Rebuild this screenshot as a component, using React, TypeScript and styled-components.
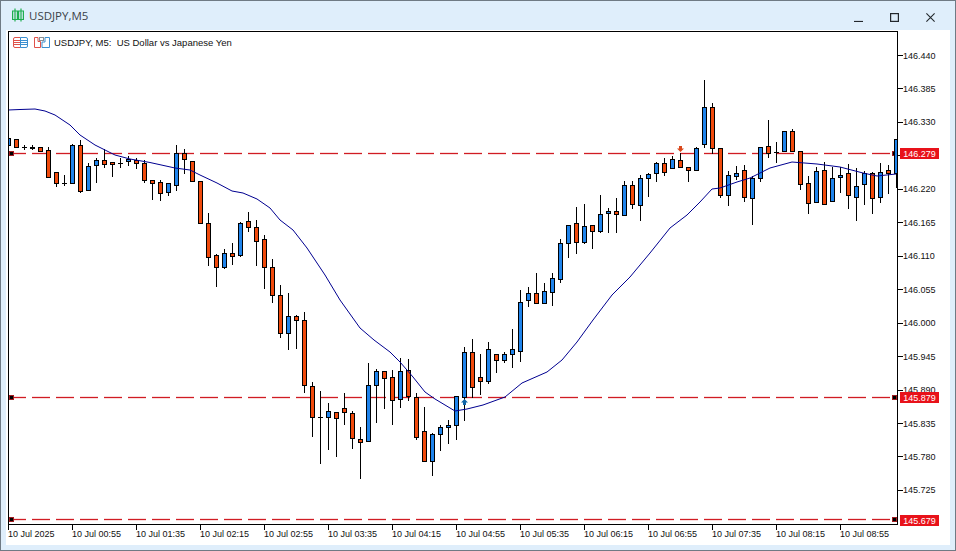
import styled, { createGlobalStyle } from 'styled-components';

const GlobalStyle = createGlobalStyle`
	html, body {
		margin: 0;
		padding: 0;
		background: #ffffff;
	}
`;

const labelFont = `'Liberation Sans', Arial, sans-serif`;

const Window = styled.div`
	width: 956px;
	height: 551px;
	box-sizing: border-box;
	display: flex;
	flex-direction: column;
	border: 1px solid #6f7a84;
	padding: 0 5px 5px;
	background: #dfeefb;
`;

const TitleBar = styled.div`
	display: flex;
	align-items: center;
	height: 29px;
	flex-shrink: 0;
`;

const WindowTitle = styled.span`
	margin-left: 5px;
	margin-top: -1px;
	font-family: 'Open Sans', sans-serif;
	font-size: 11.5px;
	color: #3c4248;
`;

const TitleIcon = styled.svg`
	margin-left: 6px;
	margin-top: -1px;
`;

const WindowControls = styled.div`
	display: flex;
	align-items: center;
	margin-left: auto;
	margin-right: 15px;
	margin-top: 3px;
	gap: 27px;
`;

const ChartPanel = styled.div`
	flex: 1;
	display: grid;
	grid-template-columns: 890px 1fr;
	grid-template-rows: 494px 1fr;
	padding: 1px 0 0 2px;
	background: #ffffff;
`;

const Plot = styled.div`
	position: relative;
	box-sizing: border-box;
	border: 1px solid #000000;
	height: 494px;
`;

const PlotSvg = styled.svg`
	display: block;
`;

const ChartHeader = styled.div`
	position: absolute;
	left: 4px;
	top: 5px;
	display: flex;
	align-items: center;
	gap: 5px;
`;

const ChartCaption = styled.span`
	margin-left: -1px;
	font-family: ${labelFont};
	font-size: 9.5px;
	line-height: 11px;
	color: #111111;
	white-space: pre;
`;

const PriceAxis = styled.div`
	position: relative;
	display: flex;
	flex-direction: column;
	padding-top: 7.8px;
`;

const PriceRow = styled.div`
	display: flex;
	align-items: center;
	height: 33.46px;
	flex-shrink: 0;
`;

const PriceTick = styled.i`
	display: block;
	width: 5px;
	height: 1px;
	background: #000000;
`;

const PriceText = styled.span`
	font-family: ${labelFont};
	font-size: 9px;
	color: #111111;
`;

const PriceTag = styled.div<{ $top: number }>`
	position: absolute;
	left: 2px;
	top: ${(p) => p.$top}px;
	width: 39px;
	height: 11px;
	display: flex;
	align-items: center;
	justify-content: center;
	background: #e8121a;
	color: #ffffff;
	font-family: ${labelFont};
	font-size: 9px;
`;

const TimeAxis = styled.div`
	grid-column: 1 / 3;
	display: flex;
`;

const TimeCell = styled.div`
	width: 64px;
	flex-shrink: 0;
	display: flex;
	flex-direction: column;
`;

const TimeTick = styled.i`
	display: block;
	width: 1px;
	height: 5px;
	background: #000000;
`;

const TimeText = styled.span`
	margin-top: -1px;
	font-family: ${labelFont};
	font-size: 9px;
	line-height: 10px;
	color: #111111;
	white-space: nowrap;
`;

type Candle = [number, number, number, number, 'b' | 'o' | 'd'];

// high, low, body top, body bottom, kind
const candles: Candle[] = [
	[138, 145, 138, 145, 'b'], [139, 147, 139, 147, 'o'], [145, 149, 147, 147, 'd'], [145, 149, 147, 148, 'd'],
	[147, 151, 147, 151, 'o'], [147, 177, 150, 177, 'o'], [172, 186, 172, 183, 'o'], [175, 185, 183, 183, 'd'],
	[144, 183, 145, 183, 'b'], [140, 192, 145, 191, 'o'], [163, 190, 166, 190, 'b'], [158, 182, 160, 165, 'b'],
	[149, 167, 160, 164, 'o'], [162, 176, 162, 164, 'o'], [158, 167, 163, 163, 'd'], [156, 165, 159, 161, 'b'],
	[158, 168, 160, 163, 'o'], [160, 182, 163, 180, 'o'], [180, 199, 180, 183, 'o'], [180, 200, 182, 193, 'o'],
	[183, 195, 183, 192, 'b'], [145, 190, 153, 185, 'b'], [149, 173, 153, 159, 'o'], [161, 181, 161, 181, 'o'],
	[181, 223, 181, 223, 'o'], [213, 265, 223, 257, 'o'], [254, 286, 255, 267, 'o'], [249, 268, 253, 267, 'b'],
	[243, 264, 253, 256, 'o'], [222, 256, 223, 255, 'b'], [212, 231, 221, 227, 'o'], [220, 265, 227, 241, 'o'],
	[235, 288, 239, 267, 'o'], [259, 302, 267, 295, 'o'], [285, 337, 295, 333, 'o'], [293, 349, 316, 333, 'b'],
	[315, 348, 316, 320, 'o'], [312, 392, 320, 385, 'o'], [382, 436, 386, 417, 'o'], [391, 463, 417, 417, 'd'],
	[403, 449, 411, 417, 'b'], [412, 456, 412, 418, 'o'], [393, 424, 408, 412, 'o'], [411, 448, 413, 438, 'o'],
	[427, 478, 439, 442, 'o'], [363, 441, 385, 441, 'b'], [369, 422, 371, 385, 'b'], [371, 408, 371, 378, 'o'],
	[370, 424, 377, 400, 'o'], [358, 407, 371, 399, 'b'], [359, 400, 370, 396, 'o'], [393, 439, 397, 437, 'o'],
	[407, 461, 431, 461, 'o'], [433, 475, 434, 461, 'b'], [425, 450, 427, 434, 'b'], [420, 443, 425, 427, 'b'],
	[396, 439, 396, 425, 'b'], [347, 420, 352, 397, 'b'], [339, 397, 352, 387, 'o'], [354, 394, 377, 381, 'o'],
	[342, 383, 349, 381, 'b'], [354, 372, 354, 360, 'o'], [352, 362, 354, 360, 'b'], [329, 367, 349, 354, 'b'],
	[290, 361, 302, 351, 'b'], [287, 306, 293, 300, 'b'], [273, 303, 293, 303, 'o'], [283, 303, 291, 303, 'b'],
	[273, 305, 278, 292, 'b'], [239, 282, 243, 279, 'b'], [225, 257, 225, 243, 'b'], [207, 253, 223, 242, 'o'],
	[204, 243, 226, 242, 'b'], [225, 248, 225, 231, 'o'], [195, 232, 214, 231, 'b'], [208, 232, 211, 213, 'b'],
	[198, 232, 211, 214, 'o'], [181, 215, 185, 215, 'b'], [181, 208, 185, 204, 'o'], [175, 220, 178, 205, 'b'],
	[173, 196, 174, 178, 'b'], [162, 181, 163, 173, 'b'], [158, 175, 163, 172, 'o'], [156, 168, 159, 168, 'b'],
	[153, 167, 160, 167, 'o'], [167, 181, 167, 170, 'o'], [147, 170, 148, 170, 'b'], [80, 147, 107, 144, 'b'],
	[103, 153, 107, 148, 'o'], [148, 197, 148, 195, 'o'], [171, 205, 175, 195, 'b'], [166, 179, 173, 176, 'b'],
	[165, 201, 170, 197, 'o'], [176, 224, 178, 198, 'b'], [147, 181, 147, 178, 'b'], [120, 157, 146, 153, 'o'],
	[142, 162, 152, 152, 'd'], [131, 151, 131, 151, 'b'], [129, 151, 131, 151, 'o'], [151, 189, 151, 184, 'o'],
	[176, 213, 183, 203, 'o'], [167, 202, 171, 202, 'b'], [162, 204, 170, 204, 'o'], [167, 201, 178, 201, 'b'],
	[167, 192, 175, 177, 'b'], [164, 208, 173, 195, 'o'], [168, 220, 186, 197, 'b'], [171, 204, 173, 184, 'b'],
	[172, 213, 173, 198, 'o'], [163, 202, 172, 197, 'b'], [165, 193, 170, 173, 'o'], [139, 187, 139, 173, 'b'],
];

const maLine =
	'8,110 20,109.5 35,109 45,111 55,115 70,125 80,135 95,145 115,155 130,159 150,162.5 175,168 190,170 200,175 217,183 232,191 243,193 257,199 270,208 280,220 293,230 307,248 325,275 340,300 360,328 374,340 390,352 400,362 413,377 425,392 435,399 455,411 467,409 483,405 505,397 522,383 547,372 562,360 577,342 593,320 612,295 630,277 650,253 670,228 687,215 700,202 712,189 720,188 737,182 750,178 770,168 792,162 817,164 840,167 863,173 877,176 896,174';

const bodyColors = { b: '#1f84ec', o: '#f04a0c', d: '#000000' };
const levels = [153, 397, 519];

const prices = [
	'146.440', '146.385', '146.330', '146.275', '146.220', '146.165', '146.110',
	'146.055', '146.000', '145.945', '145.890', '145.835', '145.780', '145.725',
];

const tags = [
	{ label: '146.279', top: 117 },
	{ label: '145.879', top: 361 },
	{ label: '145.679', top: 484 },
];

const times = [
	'10 Jul 2025', '10 Jul 00:55', '10 Jul 01:35', '10 Jul 02:15', '10 Jul 02:55', '10 Jul 03:35', '10 Jul 04:15',
	'10 Jul 04:55', '10 Jul 05:35', '10 Jul 06:15', '10 Jul 06:55', '10 Jul 07:35', '10 Jul 08:15', '10 Jul 08:55',
];

const CandleMark = ({ data, index }: { data: Candle; index: number }) => {
	const [high, low, top, bottom, kind] = data;
	const x = 8.5 + index * 8;
	return (
		<g shapeRendering='crispEdges'>
			<line x1={x} x2={x} y1={high} y2={low + 1} stroke='#000000' />
			{top === bottom ? (
				<line x1={x - 2.5} x2={x + 2.5} y1={top + 0.5} y2={top + 0.5} stroke='#000000' />
			) : (
				<rect x={x - 2} y={top + 0.5} width={4} height={bottom - top} fill={bodyColors[kind]} stroke='#000000' />
			)}
		</g>
	);
};

const LevelHandle = ({ x, y }: { x: number; y: number }) => (
	<rect x={x} y={y - 1.5} width={4} height={4} fill='#000000' stroke='#a01c20' shapeRendering='crispEdges' />
);

const PriceChart = () => (
	<PlotSvg width={888} height={492} viewBox='9 32 888 492'>
		{levels.map((y) => (
			<g key={y} shapeRendering='crispEdges'>
				<line x1={8} x2={892} y1={y + 0.5} y2={y + 0.5} stroke='#f9dcdc' strokeWidth={3} strokeDasharray='18 6' />
				<line x1={8} x2={892} y1={y + 0.5} y2={y + 0.5} stroke='#d01c24' strokeDasharray='18 6' />
				<LevelHandle x={9.5} y={y} />
				<LevelHandle x={892.5} y={y} />
			</g>
		))}
		{candles.map((c, i) => (
			<CandleMark key={i} data={c} index={i} />
		))}
		<polyline points={maLine} fill='none' stroke='#000090' strokeWidth={1} />
		<path d='M464.5 399l3.5 3.5h-2v2.5h-3v-2.5h-2z' fill='#0f64a8' />
		<path d='M680.5 152l-3.5-3.5h2v-2.5h3v2.5h2z' fill='#d9481c' />
	</PlotSvg>
);

const App = () => (
	<>
		<GlobalStyle />
		<Window>
			<TitleBar>
				<TitleIcon width={12} height={14} viewBox='0 0 12 14' fill='none' stroke='#1fae4e' strokeWidth={1.2}>
					<path d='M3 0.5v13M0.6 3h4.8v8.5H0.6zM9 0.5v13M6.6 3h4.8v8.5H6.6z' />
				</TitleIcon>
				<WindowTitle>USDJPY,M5</WindowTitle>
				<WindowControls>
					<svg width={9} height={9} viewBox='0 0 9 9' stroke='#22272c' strokeWidth={1.2}>
						<path d='M0 8.5h9' />
					</svg>
					<svg width={9} height={9} viewBox='0 0 9 9' fill='none' stroke='#22272c' strokeWidth={1.2}>
						<rect x={0.6} y={0.6} width={7.8} height={7.8} />
					</svg>
					<svg width={9} height={9} viewBox='0 0 9 9' fill='none' stroke='#22272c' strokeWidth={1.1}>
						<path d='M0.4 0.4l8.2 8.2M8.6 0.4l-8.2 8.2' />
					</svg>
				</WindowControls>
			</TitleBar>
			<ChartPanel>
				<Plot>
					<PriceChart />
					<ChartHeader>
						<svg width={15} height={11} viewBox='0 0 15 11' fill='none'>
							<path d='M7.5 0.5H2a1.5 1.5 0 0 0-1.5 1.5v7A1.5 1.5 0 0 0 2 10.5h5.5M1 3.5h6.5M1 5.5h6.5M1 7.5h6.5' stroke='#e0524a' />
							<path d='M7.5 0.5H13a1.5 1.5 0 0 1 1.5 1.5v7a1.5 1.5 0 0 1-1.5 1.5H7.5V0.5M8 3.5h6M8 5.5h6M8 7.5h6' stroke='#3b8fd0' />
						</svg>
						<svg width={16} height={11} viewBox='0 0 16 11' fill='none' style={{ marginLeft: 1 }}>
							<path d='M0.5 0.5h3.5v4h2.5v6h-6z' stroke='#e0524a' />
							<rect x={5.5} y={0.5} width={4} height={3} stroke='#8a8f94' />
							<path d='M11 0.5h4.5v10H8V5h3z' stroke='#3b8fd0' />
						</svg>
						<ChartCaption>USDJPY, M5:  US Dollar vs Japanese Yen</ChartCaption>
					</ChartHeader>
				</Plot>
				<PriceAxis>
					{prices.map((p) => (
						<PriceRow key={p}>
							<PriceTick />
							<PriceText>{p}</PriceText>
						</PriceRow>
					))}
					{tags.map((t) => (
						<PriceTag key={t.label} $top={t.top}>
							{t.label}
						</PriceTag>
					))}
				</PriceAxis>
				<TimeAxis>
					{times.map((t) => (
						<TimeCell key={t}>
							<TimeTick />
							<TimeText>{t}</TimeText>
						</TimeCell>
					))}
				</TimeAxis>
			</ChartPanel>
		</Window>
	</>
);

export default App;
